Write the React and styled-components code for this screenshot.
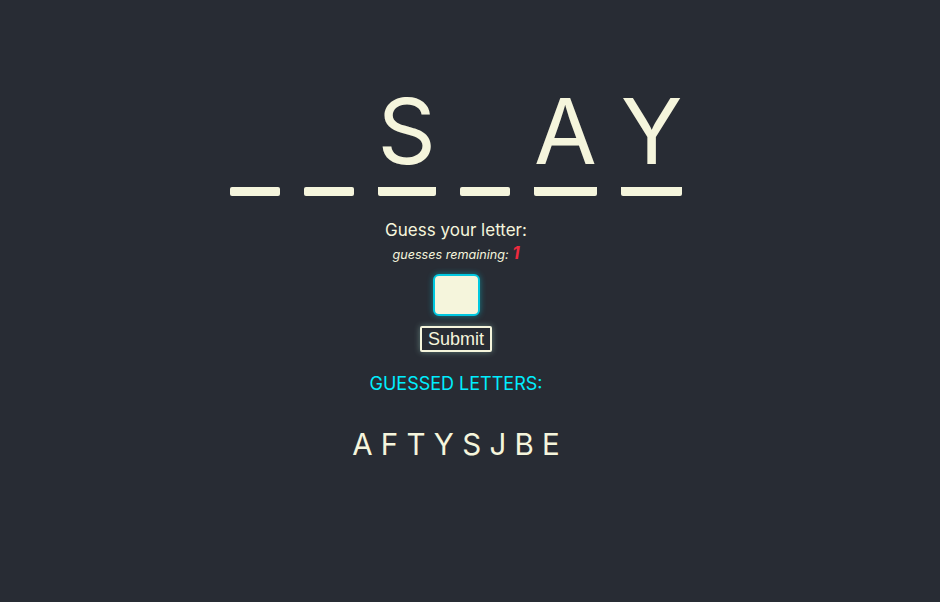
import * as React from 'react';
import styled, {createGlobalStyle} from 'styled-components';

/*========== DATA ==========*/
const word = ['', '', 'S', '', 'A', 'Y'];
const guessed = ['A', 'F', 'T', 'Y', 'S', 'J', 'B', 'E'];

function App() {
  return (
    <>
      <GlobalStyle />
      <Page>
        <Word>
          {word.map((letter, i) => (
            <Slot key={i}>{letter}</Slot>
          ))}
        </Word>
        <Prompt>Guess your letter:</Prompt>
        <Remaining>
          guesses remaining: <Count>1</Count>
        </Remaining>
        <LetterInput type='text' maxLength={1} />
        <SubmitButton>Submit</SubmitButton>
        <GuessedTitle>GUESSED LETTERS:</GuessedTitle>
        <GuessedList>{guessed.join(' ')}</GuessedList>
      </Page>
    </>
  );
}

export default App;

/*========== STYLES ==========*/
const GlobalStyle = createGlobalStyle`
  html, body {
    margin: 0;
    background-color: #282c34;
    min-height: 100%;
  }
  body {
    font-family: Inter, "Liberation Sans", sans-serif;
    color: #f5f5dc;
  }
`;

const Page = styled.div`
  min-height: 602px;
  box-sizing: border-box;
  padding: 75px 28px 0 0;
  display: flex;
  flex-direction: column;
  align-items: center;
`;

const Word = styled.div`
  display: flex;
  gap: 24px;
  align-items: flex-end;
`;

const Slot = styled.span`
  min-width: 50px;
  font-size: 91px;
  line-height: 112px;
  text-align: center;
  border-bottom: 9px solid #f5f5dc;
  border-radius: 2px;
`;

const Prompt = styled.div`
  margin-top: 23px;
  font-size: 17px;
  line-height: 22px;
`;

const Remaining = styled.div`
  margin-top: 3px;
  font-size: 12.6px;
  font-style: italic;
  line-height: 18px;
`;

const Count = styled.span`
  color: #ee2a3e;
  font-weight: 700;
  font-size: 17px;
`;

const LetterInput = styled.input`
  margin-top: 10px;
  width: 47px;
  height: 42px;
  box-sizing: border-box;
  border: 2px solid #00c8e0;
  border-radius: 6px;
  background: #f5f5dc;
  box-shadow: 0 0 6px rgba(0, 220, 240, 0.45);
  outline: none;
  text-align: center;
  font-size: 24px;
`;

const SubmitButton = styled.button`
  margin-top: 10px;
  height: 26px;
  padding: 0 6px;
  background: #282c34;
  color: #f5f5dc;
  border: 2px solid #f5f5dc;
  border-radius: 2px;
  box-shadow: 0 0 6px rgba(180, 240, 220, 0.4);
  font-family: "Liberation Sans", Arial, sans-serif;
  font-size: 18px;
  line-height: 20px;
`;

const GuessedTitle = styled.div`
  margin-top: 21px;
  color: #00eeff;
  font-size: 18px;
  line-height: 22px;
`;

const GuessedList = styled.div`
  margin-top: 31px;
  font-size: 29.5px;
  line-height: 36px;
`;
